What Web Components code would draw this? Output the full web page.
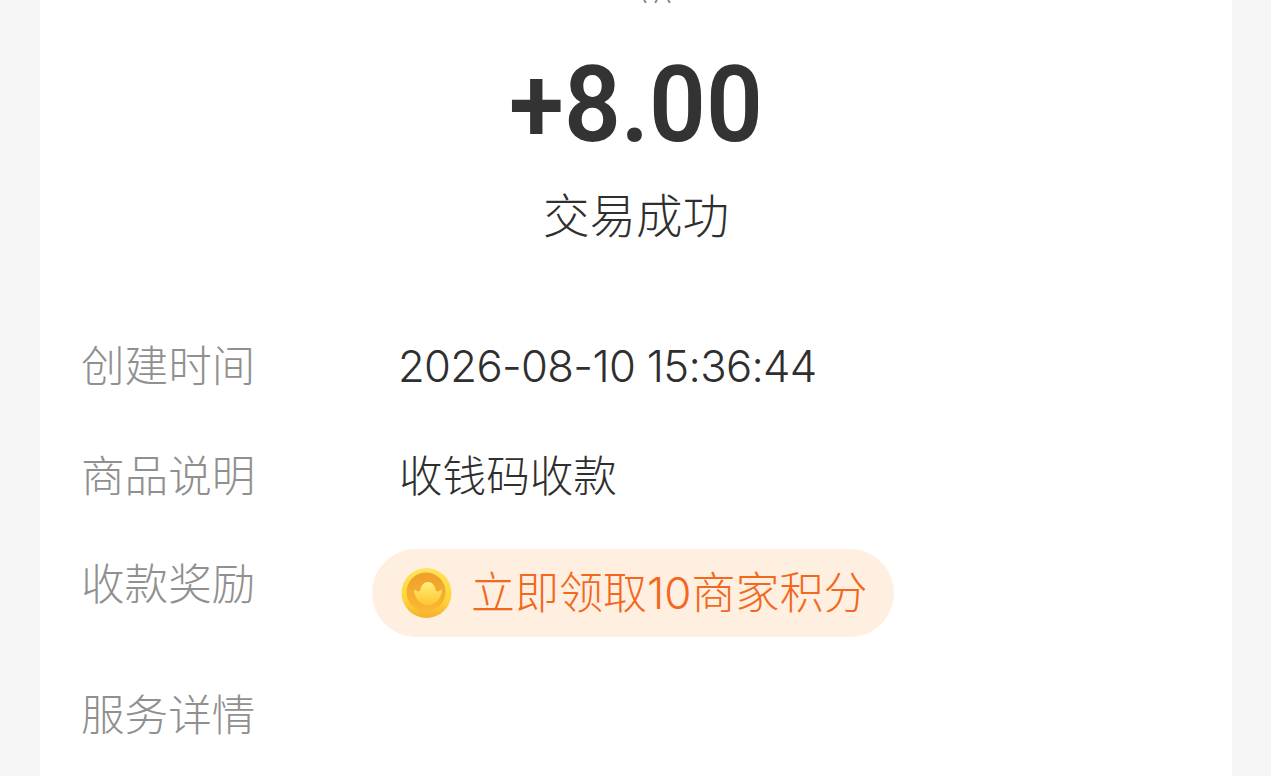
<!DOCTYPE html>
<html lang="zh">
<head>
<meta charset="utf-8">
<style>
  html, body { margin: 0; height: 100%; overflow: hidden; background: #f5f5f5; }
  body { font-family: Inter, "Noto Sans CJK SC", sans-serif; font-weight: 300; }
</style>
</head>
<body>
<bill-card>
  <bill-amount value="+8.00" status="交易成功"></bill-amount>
  <bill-row label="创建时间"><bill-time>2026-08-10 15:36:44</bill-time></bill-row>
  <bill-row label="商品说明"><span>收钱码收款</span></bill-row>
  <bill-row label="收款奖励" kind="reward"><reward-pill>立即领取10商家积分</reward-pill></bill-row>
  <bill-row label="服务详情"></bill-row>
</bill-card>

<script>
class BillCard extends HTMLElement {
  constructor() {
    super();
    this.shadow = this.attachShadow({mode: 'open'});
    this.shadow.innerHTML = `<style>
      :host { display: block; height: 776px; margin: 0 39px 0 40px; background: #fff; overflow: hidden; }
    </style><slot></slot>`;
  }
}

class BillAmount extends HTMLElement {
  constructor() {
    super();
    this.shadow = this.attachShadow({mode: 'open'});
    this.shadow.innerHTML = `<style>
      :host { display: block; text-align: center; padding: 0 0 88px; color: #333; }
      .cut { display: block; width: 30px; height: 3px; margin: 0 auto 39px; transform: translateX(21px); }
      .value { display: inline-block; font: 580 106px/126px Roboto, sans-serif; transform: scaleX(.94); }
      .status { font-size: 46.5px; line-height: 60px; margin-top: 18px; color: #2f2f2f; }
    </style>
    <svg class="cut" viewBox="0 0 30 3"><path d="M2 0l2 3M13 3l2-3M26 0l2 3" stroke="#888" stroke-width="2" fill="none"/></svg>
    <div class="value">${this.getAttribute('value')}</div>
    <div class="status">${this.getAttribute('status')}</div>`;
  }
}

class BillRow extends HTMLElement {
  constructor() {
    super();
    this.shadow = this.attachShadow({mode: 'open'});
    this.shadow.innerHTML = `<style>
      :host { display: flex; padding: 0 0 0 41px; margin-bottom: 44px; font-size: 43.6px; line-height: 66px; color: #2f2f2f; }
      :host([kind="reward"]) { margin-top: -2px; margin-bottom: 46px; }
      .label { width: 318px; flex: none; color: #909090; }
      .value { display: flex; align-items: flex-start; }
    </style>
    <div class="label">${this.getAttribute('label')}</div>
    <div class="value"><slot></slot></div>`;
  }
}

class BillTime extends HTMLElement {
  constructor() {
    super();
    this.shadow = this.attachShadow({mode: 'open'});
    this.shadow.innerHTML = `<style>
      :host { display: block; margin-left: -1px; font-weight: 340; letter-spacing: -.66px; }
    </style><slot></slot>`;
  }
}

class RewardPill extends HTMLElement {
  constructor() {
    super();
    this.shadow = this.attachShadow({mode: 'open'});
    this.shadow.innerHTML = `<style>
      :host { display: inline-flex; align-items: center; gap: 18px; height: 88px; padding: 0 26px 0 29px; margin: -3px 0 0 -27px;
        border-radius: 44px; background: #ffefe1; color: #f2681c; font-size: 44px; }
      svg { width: 52px; height: 52px; flex: none; }
    </style>
    <svg viewBox="0 0 52 52">
      <defs>
        <linearGradient id="rim" x1="0" y1="0" x2="0" y2="1"><stop offset="0" stop-color="#ffe45a"/><stop offset=".65" stop-color="#ffd338"/><stop offset="1" stop-color="#f4b02c"/></linearGradient>
        <linearGradient id="disc" x1="0" y1="0" x2="0" y2="1"><stop offset="0" stop-color="#ee9f2c"/><stop offset="1" stop-color="#fbb733"/></linearGradient>
        <linearGradient id="ingot" x1="0" y1="0" x2="0" y2="1"><stop offset="0" stop-color="#fff07a"/><stop offset="1" stop-color="#ffc52f"/></linearGradient>
      </defs>
      <circle cx="25.5" cy="26" r="25" fill="url(#rim)"/>
      <circle cx="25" cy="25" r="19.500" fill="url(#disc)"/>
      <path d="M13 22c2 2 4 3 6 2 1-3 2-9 8-9s7 6 8 9c2 1 4 0 6-2 0 9-6 16-14 16s-14-7-14-16z" fill="url(#ingot)"/>
    </svg>
    <span><slot></slot></span>`;
  }
}

customElements.define('bill-card', BillCard);
customElements.define('bill-amount', BillAmount);
customElements.define('bill-row', BillRow);
customElements.define('bill-time', BillTime);
customElements.define('reward-pill', RewardPill);
</script>
</body>
</html>
